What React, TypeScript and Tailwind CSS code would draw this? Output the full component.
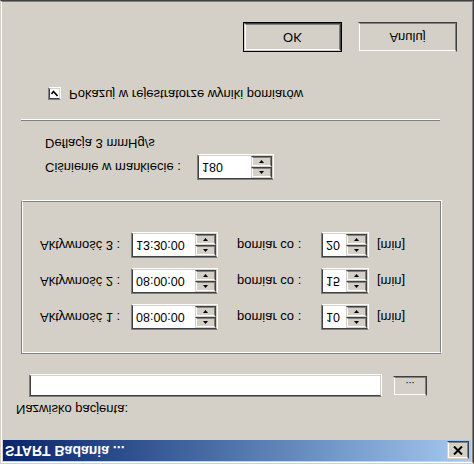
import React from "react";

const raisedOuter = "border border-t-[#d4d0c8] border-l-[#d4d0c8] border-b-[#404040] border-r-[#404040]";
const raisedInner = "border border-t-white border-l-white border-b-[#808080] border-r-[#808080]";
const sunkenOuter = "border border-t-[#808080] border-l-[#808080] border-b-white border-r-white";
const sunkenInner = "border border-t-[#404040] border-l-[#404040] border-b-[#d4d0c8] border-r-[#d4d0c8]";

const SpinBtn = ({ up }: { up?: boolean }) => (
  <div className={`flex flex-1 ${raisedOuter}`}>
    <div className={`flex flex-1 items-center justify-center bg-[#d4d0c8] ${raisedInner}`}>
      <svg width="5" height="3" viewBox="0 0 5 3">
        <path d={up ? "M2.5 0 L5 3 L0 3 Z" : "M0 0 L5 0 L2.5 3 Z"} fill="#000" />
      </svg>
    </div>
  </div>
);

const Spin = ({ value, className }: { value: string; className: string }) => (
  <div className={`flex h-[26px] ${sunkenOuter} ${className}`}>
    <div className={`flex flex-1 bg-white ${sunkenInner}`}>
      <span className="flex-1 pl-[3px] text-[12.5px] leading-[22px] text-black">{value}</span>
      <div className="flex w-[21px] flex-col">
        <SpinBtn up />
        <SpinBtn />
      </div>
    </div>
  </div>
);

const Button = ({ label, isDefault }: { label: string; isDefault?: boolean }) => (
  <div className={`flex h-[30px] w-[99px] ${isDefault ? "border border-black" : ""}`}>
    <div className={`flex flex-1 ${raisedOuter}`}>
      <div className={`flex flex-1 items-center justify-center bg-[#d4d0c8] text-[13px] text-black ${raisedInner}`}>
        {label}
      </div>
    </div>
  </div>
);

const activities = [
  { name: "Aktywność 1 :", time: "08:00:00", every: "10" },
  { name: "Aktywność 2 :", time: "08:00:00", every: "15" },
  { name: "Aktywność 3 :", time: "13:30:00", every: "20" },
];

export default function App() {
  return (
    <div className="h-[464px] w-[474px] -scale-y-100 font-['Liberation_Sans',Arial,sans-serif] text-black">
      {/* window frame */}
      <div className="flex h-full w-full border border-t-[#d4d0c8] border-l-[#d4d0c8] border-b-[#404040] border-r-[#404040]">
        <div className="flex flex-1 flex-col border border-t-white border-l-white border-b-[#808080] border-r-[#808080] bg-[#d4d0c8] p-px">
          {/* title bar */}
          <div className="flex h-[21px] items-center justify-between bg-linear-to-r from-[#0a246a] to-[#a6caf0] pl-[2px] pr-[2px]">
            <span className="text-[14px] font-bold text-white">START Badania ...</span>
            <div className={`flex h-[18px] w-[22px] ${raisedOuter}`}>
              <div className={`flex flex-1 items-center justify-center bg-[#d4d0c8] ${raisedInner}`}>
                <svg width="10" height="9" viewBox="0 0 10 9">
                  <path d="M1 0.5 L9 8.5 M9 0.5 L1 8.5" stroke="#000" strokeWidth="2" />
                </svg>
              </div>
            </div>
          </div>

          {/* patient */}
          <div className="ml-[13px] mt-[24px] h-[14px] text-[13px] leading-[14px]">Nazwisko pacjenta:</div>
          <div className="ml-[26px] mt-[5px] flex items-start gap-[11px]">
            <div className={`flex h-[23px] w-[353px] ${sunkenOuter}`}>
              <div className={`flex-1 bg-white ${sunkenInner}`} />
            </div>
            <div className={`mt-px flex h-[20px] w-[34px] ${raisedOuter}`}>
              <div className={`flex flex-1 items-center justify-center bg-[#d4d0c8] text-[11px] leading-none ${raisedInner}`}>
                ...
              </div>
            </div>
          </div>

          {/* activities group */}
          <div className={`ml-[18px] mt-[20px] flex h-[154px] w-[421px] ${sunkenOuter}`}>
            <div className="flex flex-1 flex-col gap-[10px] border border-t-white border-l-white border-b-[#808080] border-r-[#808080] pl-[17px] pt-[22px]">
              {activities.map((a) => (
                <div key={a.name} className="flex items-center text-[13px]">
                  <span className="w-[91px]">{a.name}</span>
                  <Spin value={a.time} className="w-[87px]" />
                  <span className="ml-[19px] w-[84px]">pomiar co :</span>
                  <Spin value={a.every} className="w-[48px]" />
                  <span className="ml-[8px]">[min]</span>
                </div>
              ))}
            </div>
          </div>

          {/* pressure */}
          <div className="ml-[42px] mt-[20px] flex items-center text-[13px]">
            <span className="w-[152px]">Ciśnienie w mankiecie :</span>
            <Spin value="180" className="w-[77px]" />
          </div>
          <div className="ml-[42px] mt-[4px] h-[14px] text-[13px] leading-[14px]">Deflacja 3 mmHg/s</div>

          {/* separator */}
          <div className="ml-[18px] mt-[15px] w-[419px] border-t border-b border-t-[#808080] border-b-white" />

          {/* checkbox */}
          <div className="ml-[45px] mt-[18px] flex items-center gap-[8px] text-[13px]">
            <div className={`flex h-[13px] w-[13px] ${sunkenOuter}`}>
              <div className={`flex flex-1 items-center justify-center bg-white ${sunkenInner}`}>
                <svg width="7" height="7" viewBox="0 0 7 7">
                  <path d="M0.5 3 L2.5 5.5 L6.5 1" stroke="#000" strokeWidth="1.6" fill="none" />
                </svg>
              </div>
            </div>
            <span className="leading-[14px]">Pokazuj w rejestratorze wyniki pomiarów</span>
          </div>

          {/* buttons */}
          <div className="ml-[240px] mt-[35px] flex gap-[16px]">
            <Button label="OK" isDefault />
            <Button label="Anuluj" />
          </div>
        </div>
      </div>
    </div>
  );
}
